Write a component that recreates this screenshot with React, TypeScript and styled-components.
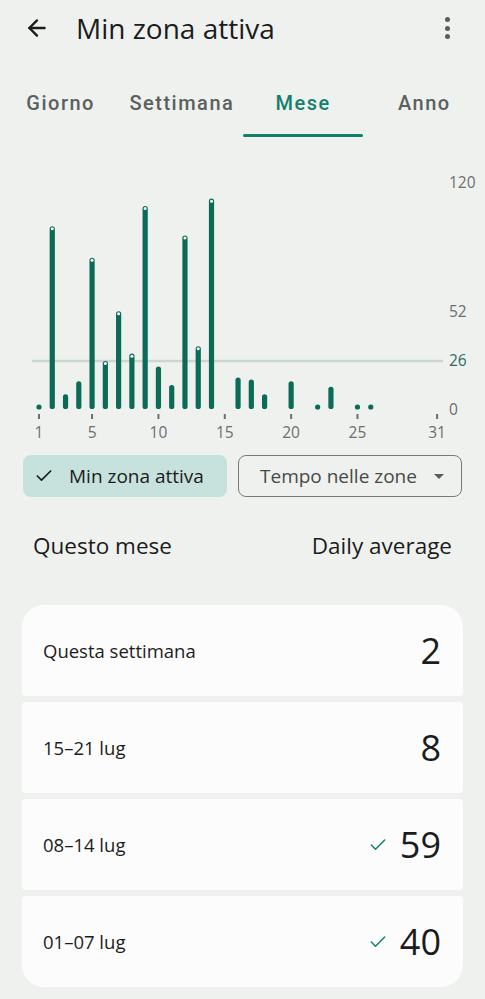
import React from 'react';
import styled, { createGlobalStyle } from 'styled-components';
import { ArrowLeft, Check } from 'lucide-react';

const GlobalStyle = createGlobalStyle`
  body {
    margin: 0;
    background: #eff1ef;
    font-family: Roboto, "Noto Sans", sans-serif;
    color: #1b1c1b;
  }
`;

const Page = styled.div`
  width: 485px;
  min-height: 999px;
  background: #eff1ef;
`;

const AppBar = styled.header`
  height: 56px;
  display: flex;
  align-items: center;
  padding: 0 35px 0 24px;
`;

const BackButton = styled.div`
  width: 28px;
  display: flex;
  align-items: center;
  color: #1b1c1b;
`;

const Title = styled.h1`
  margin: 0 0 0 24px;
  flex: 1;
  font-family: "Open Sans", Roboto, sans-serif;
  font-size: 28px;
  font-weight: 400;
  letter-spacing: 0;
`;

const Kebab = styled.div`
  display: flex;
  flex-direction: column;
  gap: 3.5px;

  span {
    width: 5px;
    height: 5px;
    border-radius: 50%;
    background: #5a5d5b;
  }
`;

const Tabs = styled.nav`
  margin-top: 19px;
  display: grid;
  grid-template-columns: repeat(4, 1fr);
`;

const Tab = styled.div<{ $active?: boolean }>`
  position: relative;
  height: 62px;
  display: flex;
  align-items: center;
  justify-content: center;
  padding-bottom: 6px;
  box-sizing: border-box;
  font-size: 20px;
  font-weight: 500;
  letter-spacing: 1.5px;
  color: ${({ $active }) => ($active ? '#13806b' : '#5b605d')};

  &::after {
    content: '';
    display: ${({ $active }) => ($active ? 'block' : 'none')};
    position: absolute;
    left: 0;
    right: 1px;
    bottom: 0;
    height: 3px;
    border-radius: 2px;
    background: #13806b;
  }
`;

const ChartWrap = styled.div`
  margin-top: 23px;
  height: 285px;

  svg {
    display: block;
  }
`;

const ChipRow = styled.div`
  margin-top: 10px;
  padding: 0 23px;
  display: flex;
  gap: 11px;
`;

const Chip = styled.div<{ $selected?: boolean }>`
  height: 42px;
  box-sizing: border-box;
  display: flex;
  align-items: center;
  border-radius: 8px;
  font-size: 19px;
  font-family: "Open Sans", Roboto, sans-serif;
  background: ${({ $selected }) => ($selected ? '#c7e2dc' : 'transparent')};
  border: ${({ $selected }) => ($selected ? 'none' : '1.3px solid #777b78')};
  color: ${({ $selected }) => ($selected ? '#1b1c1b' : '#464a47')};
  padding: ${({ $selected }) => ($selected ? '0 10px 0 11px' : '0 17px 0 21px')};
  width: ${({ $selected }) => ($selected ? '204px' : '224px')};
  gap: ${({ $selected }) => ($selected ? '15px' : '0')};
`;

const ChipLabel = styled.span`
  flex: 1;
  white-space: nowrap;
`;

const Caret = styled.span`
  width: 0;
  height: 0;
  border-left: 5px solid transparent;
  border-right: 5px solid transparent;
  border-top: 5px solid #5a5d5b;
`;

const SummaryRow = styled.div`
  margin-top: 33px;
  padding: 0 33px;
  display: flex;
  justify-content: space-between;
  font-family: "Open Sans", Roboto, sans-serif;
  font-size: 22.5px;
  color: #1b1c1b;
`;

const CardList = styled.div`
  margin-top: 44px;
  padding: 0 22px;
  display: flex;
  flex-direction: column;
  gap: 6px;
`;

const Card = styled.div<{ $pos: 'first' | 'mid' | 'last' }>`
  height: 91px;
  background: #fbfcfb;
  display: flex;
  align-items: center;
  padding: 0 22px 0 21px;
  border-radius: ${({ $pos }) =>
    $pos === 'first' ? '22px 22px 4px 4px' : $pos === 'last' ? '4px 4px 22px 22px' : '4px'};
`;

const CardLabel = styled.span`
  flex: 1;
  font-family: "Open Sans", Roboto, sans-serif;
  font-size: 18.5px;
`;

const CardValue = styled.span`
  display: flex;
  align-items: center;
  gap: 12px;
  font-family: "Open Sans", Roboto, sans-serif;
  font-size: 36px;
  color: #1b1c1b;

  svg {
    color: #13806b;
  }
`;

// minutes per day in the month
const days = [
  1, 99, 8, 15, 82, 26, 53, 30, 110, 23, 13, 94, 34, 114, 0, 17, 16, 8, 0, 15, 0, 1, 12, 0, 1, 1, 0, 0, 0, 0, 0,
];

const BASE = 249;
const SCALE = 1.846;
const dayX = (d: number) => 39 + (d - 1) * 13.27;

const MonthChart: React.FC = () => (
  <svg width={485} height={285} viewBox="0 0 485 285">
    <line x1={32} x2={443} y1={201} y2={201} stroke="#cbd6d1" strokeWidth={2.5} />
    {days.map((v, i) => {
      const x = dayX(i + 1);
      if (v === 0) return null;
      if (v < 3) return <circle key={i} cx={x} cy={BASE - 2} r={2.6} fill="#0b6b57" />;
      const top = BASE - v * SCALE;
      return (
        <g key={i}>
          <rect x={x - 2.6} y={top} width={5.2} height={BASE - top} rx={2.6} fill="#0b6b57" />
          {v >= 26 && <circle cx={x} cy={top + 2.6} r={1.5} fill="#ffffff" />}
        </g>
      );
    })}
    {[1, 5, 10, 15, 20, 25, 31].map((d) => (
      <g key={d}>
        <rect x={dayX(d) - 1} y={254} width={2} height={5} fill="#6b6f6d" />
        <text
          x={dayX(d)}
          y={278}
          textAnchor="middle"
          fontSize={15.5}
          fill="#6b6f6d"
          fontFamily='"Open Sans", Roboto, sans-serif'
        >
          {d}
        </text>
      </g>
    ))}
    {[
      { v: '120', y: 28, c: '#6b6f6d' },
      { v: '52', y: 157, c: '#6b6f6d' },
      { v: '26', y: 206, c: '#2c6b5f' },
      { v: '0', y: 255, c: '#6b6f6d' },
    ].map((l) => (
      <text key={l.v} x={449} y={l.y} fontSize={15.5} fill={l.c} fontFamily='"Open Sans", Roboto, sans-serif'>
        {l.v}
      </text>
    ))}
  </svg>
);

const weeks = [
  { label: 'Questa settimana', value: '2', done: false },
  { label: '15–21 lug', value: '8', done: false },
  { label: '08–14 lug', value: '59', done: true },
  { label: '01–07 lug', value: '40', done: true },
];

export default function App() {
  return (
    <Page>
      <GlobalStyle />
      <AppBar>
        <BackButton>
          <ArrowLeft size={26} strokeWidth={2.2} />
        </BackButton>
        <Title>Min zona attiva</Title>
        <Kebab>
          <span />
          <span />
          <span />
        </Kebab>
      </AppBar>

      <Tabs>
        <Tab>Giorno</Tab>
        <Tab>Settimana</Tab>
        <Tab $active>Mese</Tab>
        <Tab>Anno</Tab>
      </Tabs>

      <ChartWrap>
        <MonthChart />
      </ChartWrap>

      <ChipRow>
        <Chip $selected>
          <Check size={20} strokeWidth={2} />
          <ChipLabel>Min zona attiva</ChipLabel>
        </Chip>
        <Chip>
          <ChipLabel>Tempo nelle zone</ChipLabel>
          <Caret />
        </Chip>
      </ChipRow>

      <SummaryRow>
        <span>Questo mese</span>
        <span>Daily average</span>
      </SummaryRow>

      <CardList>
        {weeks.map((w, i) => (
          <Card key={w.label} $pos={i === 0 ? 'first' : i === weeks.length - 1 ? 'last' : 'mid'}>
            <CardLabel>{w.label}</CardLabel>
            <CardValue>
              {w.done && <Check size={20} strokeWidth={1.8} />}
              {w.value}
            </CardValue>
          </Card>
        ))}
      </CardList>
    </Page>
  );
}
